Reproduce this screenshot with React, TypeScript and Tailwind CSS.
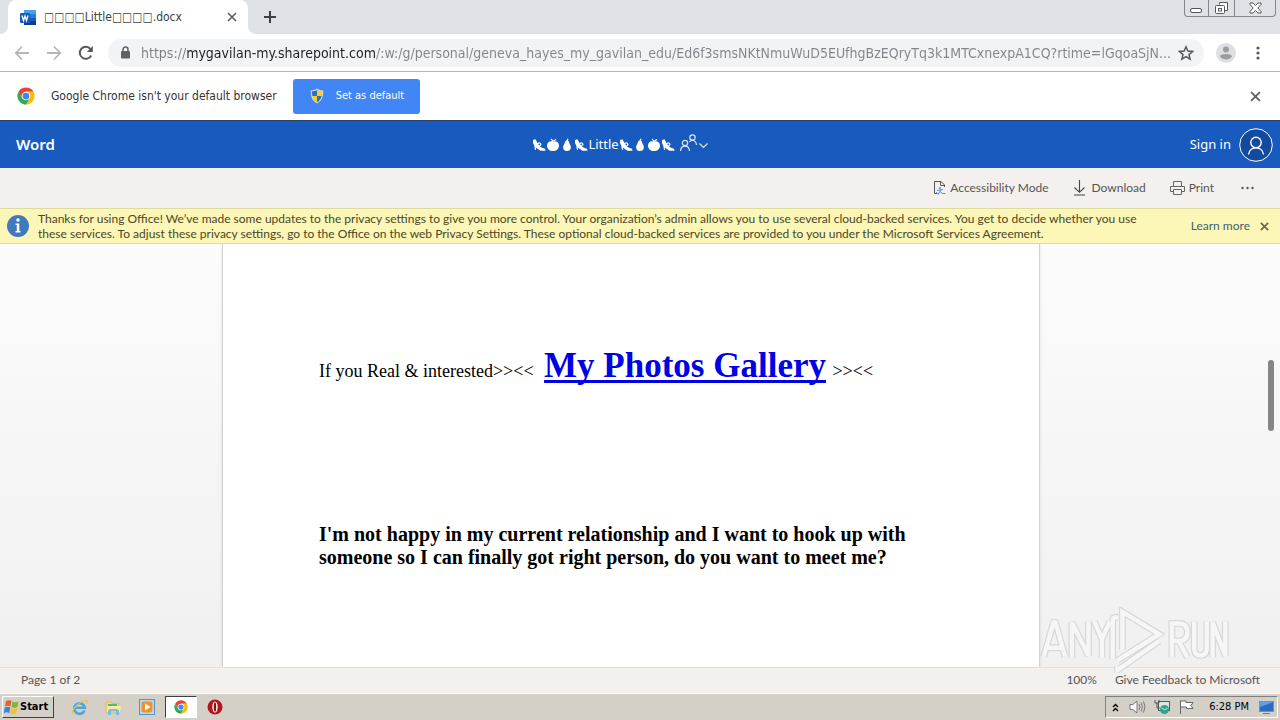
import React from "react";

function WordLogo() {
  return (
    <svg width="17" height="17" viewBox="0 0 17 17" aria-hidden="true">
      <rect x="4" y="1" width="12" height="4" fill="#41a5ee" />
      <rect x="4" y="5" width="12" height="4" fill="#2b7cd3" />
      <rect x="4" y="9" width="12" height="3" fill="#185abd" />
      <rect x="4" y="12" width="12" height="4" fill="#103f91" />
      <rect x="0" y="4" width="10" height="10" rx="1" fill="#185abd" />
      <path d="M2 6.5 3.5 11.5 5 7 6.5 11.5 8 6.5" fill="none" stroke="#fff" strokeWidth="1.3" />
    </svg>
  );
}

function ChromeLogo({ size }: { size: number }) {
  return (
    <svg width={size} height={size} viewBox="0 0 48 48" aria-hidden="true">
      <path d="M24 12.5H43.9A23 23 0 0 0 4.1 12.5L14 29.7Z" fill="#ea4335" />
      <path d="M34 29.7 24 47A23 23 0 0 0 43.9 12.5H24Z" fill="#fbbc05" />
      <path d="M14 29.7 4.1 12.5A23 23 0 0 0 24 47L34 29.7Z" fill="#34a853" />
      <circle cx="24" cy="24" r="11.5" fill="#fff" />
      <circle cx="24" cy="24" r="9" fill="#4285f4" />
    </svg>
  );
}

function Cross({ size, width, color }: { size: number; width: number; color: string }) {
  return (
    <svg width={size} height={size} viewBox="0 0 10 10" aria-hidden="true">
      <path d="M1 1 9 9M9 1 1 9" stroke={color} strokeWidth={width} fill="none" />
    </svg>
  );
}

function Shield() {
  return (
    <svg width="14" height="16" viewBox="0 0 14 16" aria-hidden="true">
      <path d="M7 .5C5 1.8 3 2.3.8 2.3c-.3 6 .9 10.4 6.2 13.2 5.3-2.8 6.5-7.2 6.2-13.2C11 2.3 9 1.8 7 .5Z" fill="#d5d2b8" />
      <path d="M7 2C5.5 3 3.7 3.4 2 3.5c0 1.7 0 3 .4 4.5H7Z" fill="#2a6fd0" />
      <path d="M7 2c1.5 1 3.3 1.4 5 1.5 0 1.7 0 3-.4 4.5H7Z" fill="#fbd116" />
      <path d="M2.4 8H7v6.2C4.6 12.8 3 10.7 2.4 8Z" fill="#fbd116" />
      <path d="M11.6 8H7v6.2c2.4-1.4 4-3.5 4.6-6.2Z" fill="#2a6fd0" />
    </svg>
  );
}

function TabStrip() {
  return (
    <div className="flex h-[34px] shrink-0 items-stretch bg-[#dee1e6]">
      <div className="w-2 bg-white">
        <div className="h-full rounded-br-lg bg-[#dee1e6]" />
      </div>
      <div className="w-60 bg-[#dee1e6]">
        <div className="flex h-full items-center rounded-t-lg bg-white pr-2 pl-3">
          <WordLogo />
          <span className="ml-[7px] flex-1 text-xs whitespace-nowrap text-[#3c4043]">□□□□Little□□□□.docx</span>
          <button aria-label="Close tab" className="flex size-4 items-center justify-center">
            <Cross size={10} width={1.7} color="#5f6368" />
          </button>
        </div>
      </div>
      <div className="w-2 bg-white">
        <div className="h-full rounded-bl-lg bg-[#dee1e6]" />
      </div>
      <button aria-label="New tab" className="ml-1 flex w-5 items-center justify-center">
        <svg width="12" height="12" viewBox="0 0 12 12"><path d="M6 0V12M0 6H12" stroke="#3c4043" strokeWidth="2" /></svg>
      </button>
      <div className="mr-1 ml-auto flex h-[17px] overflow-hidden rounded-b-[4px] border border-t-0 border-[#83878d]">
        <button aria-label="Minimize" className="flex w-6 items-center justify-center border-r border-[#83878d]">
          <svg width="13" height="14" viewBox="0 0 13 14"><rect x=".5" y="7.5" width="11" height="4" rx="1.5" fill="#fff" stroke="#53565c" /></svg>
        </button>
        <button aria-label="Restore" className="flex w-[26px] items-center justify-center border-r border-[#83878d]">
          <svg width="13" height="14" viewBox="0 0 13 14"><path d="M4.5 3.5V1.5H12.5V9.5H9.5" fill="#fff" stroke="#53565c" /><rect x=".5" y="4.5" width="9" height="8" rx="1" fill="#fff" stroke="#53565c" /><rect x="3.5" y="7.5" width="3" height="2.5" fill="none" stroke="#53565c" /></svg>
        </button>
        <button aria-label="Close" className="flex w-10 items-center justify-center">
          <svg width="13" height="12" viewBox="0 0 13 12"><path d="M1 1H4L6.5 3.5 9 1H12V2.5L8.8 6 12 9.5V11H9L6.5 8.5 4 11H1V9.5L4.2 6 1 2.5Z" fill="#fff" stroke="#53565c" /></svg>
        </button>
      </div>
    </div>
  );
}

function Arrow({ back }: { back?: boolean }) {
  return (
    <svg width="16" height="16" viewBox="0 0 16 16" aria-hidden="true">
      <path d={back ? "M15 8H2M8 1.5 1.8 8 8 14.5" : "M1 8H14M8 1.5 14.2 8 8 14.5"} stroke="#b4b6b9" strokeWidth="1.8" fill="none" />
    </svg>
  );
}

function Toolbar() {
  return (
    <div className="flex h-[38px] shrink-0 items-center border-b border-[#b3b5b8] bg-white px-3.5">
      <button aria-label="Back" className="flex w-4 justify-center"><Arrow back /></button>
      <button aria-label="Forward" className="ml-4 flex w-4 justify-center"><Arrow /></button>
      <button aria-label="Reload" className="ml-4 flex w-4 justify-center">
        <svg width="16" height="16" viewBox="0 0 16 16"><path d="M13.2 10.5A6 6 0 1 1 12.5 4.1" stroke="#55585c" strokeWidth="2" fill="none" /><path d="M14.8 1V7H8.8Z" fill="#55585c" /></svg>
      </button>
      <div className="ml-3.5 flex h-7 min-w-0 flex-1 items-center rounded-full bg-[#f1f3f4] pr-2.5 pl-3">
        <svg width="11" height="13" viewBox="0 0 11 13" aria-hidden="true"><path d="M3 6V3.5A2.5 2.5 0 0 1 8 3.5V6" stroke="#5f6368" strokeWidth="1.5" fill="none" /><rect x="1" y="5" width="9" height="7.5" rx="1" fill="#5f6368" /></svg>
        <input
          aria-label="Address"
          readOnly
          value="https://mygavilan-my.sharepoint.com/:w:/g/personal/geneva_hayes_my_gavilan_edu/Ed6f3smsNKtNmuWuD5EUfhgBzEQryTq3k1MTCxnexpA1CQ?rtime=lGqoaSjN..."
          className="ml-2.5 min-w-0 flex-1 bg-[linear-gradient(to_right,#7c8186_46px,#202124_46px,#202124_235px,#80868b_235px)] bg-clip-text text-sm text-transparent outline-none"
        />
        <button aria-label="Bookmark this page" className="ml-1">
          <svg width="16" height="16" viewBox="0 0 16 16"><path d="M8 1.8 9.9 6.1 14.6 6.5 11 9.6 12.1 14.2 8 11.7 3.9 14.2 5 9.6 1.4 6.5 6.1 6.1Z" stroke="#55585c" strokeWidth="1.5" fill="none" /></svg>
        </button>
      </div>
      <button aria-label="Profile" className="ml-3">
        <svg width="20" height="20" viewBox="0 0 20 20"><circle cx="10" cy="10" r="10" fill="#dedfe1" /><circle cx="10" cy="6.5" r="3" fill="#9a9da1" /><path d="M4 13.5Q4 11 10 11T16 13.5Q14 16.5 10 16.5T4 13.5Z" fill="#9a9da1" /></svg>
      </button>
      <button aria-label="Menu" className="ml-3.5 flex w-4 justify-center">
        <svg width="4" height="14" viewBox="0 0 4 14"><g fill="#55585c"><circle cx="2" cy="2" r="1.6" /><circle cx="2" cy="7" r="1.6" /><circle cx="2" cy="12" r="1.6" /></g></svg>
      </button>
    </div>
  );
}

function InfoBar() {
  return (
    <div className="flex h-[49px] shrink-0 items-center border-b border-[#2c4365] bg-white pr-[19px] pl-[17px]">
      <ChromeLogo size={18} />
      <span className="ml-4 text-xs text-[#333]">Google Chrome isn't your default browser</span>
      <button className="ml-4 flex h-[35px] w-[127px] items-center rounded-[3px] bg-[#4285f4] pl-[17px] text-[11px] text-white">
        <Shield />
        <span className="ml-3">Set as default</span>
      </button>
      <button aria-label="Dismiss" className="ml-auto"><Cross size={11} width={1.7} color="#5f6368" /></button>
    </div>
  );
}

function Heel() {
  return (
    <svg width="14" height="14" viewBox="0 0 14 14" role="img" aria-label="High-heeled shoe">
      <path d="M1 2 3.5 1.2 5.5 5 7.5 8 10 9.8 13 10.8 13.5 12.8H8.5L5.5 10.8 3.8 9.5 4 12H3L2.2 7.5 1 5Z" fill="#fff" />
      <path d="M5 6.2Q8.500 3.500 9 6.500L7.500 8" stroke="#fff" strokeWidth="1.1" fill="none" />
    </svg>
  );
}

function Apple() {
  return (
    <svg width="14" height="14" viewBox="0 0 14 14" role="img" aria-label="Apple">
      <path d="M7 3.7C9.5 2.5 13 4 13 7.5S10.5 13 7 13 1 11 1 7.5 4.5 2.5 7 3.7Z" fill="#fff" />
      <path d="M7 4.5C7 3 6.5 2 5 1M7.5 3 10 1.5" stroke="#fff" strokeWidth="1.3" fill="none" />
    </svg>
  );
}

function Pear() {
  return (
    <svg width="14" height="14" viewBox="0 0 14 14" role="img" aria-label="Pear">
      <path d="M7 2.5C9.5 2.5 8.8 5 10 6.5S11.8 13 7 13 2.8 8 4 6.5 4.5 2.5 7 2.5Z" fill="#fff" />
      <path d="M7 3 8 .8" stroke="#fff" strokeWidth="1.2" />
    </svg>
  );
}

function WordHeader() {
  return (
    <header className="flex h-[47px] shrink-0 items-center bg-[#185abd] pr-[7px] pl-4 font-['Noto_Sans',sans-serif] text-white">
      <div className="flex-1 text-[15px] font-semibold">Word</div>
      <button aria-label="Little, document details" className="mr-12 flex items-center text-[13px]">
        <Heel /><Apple /><Pear /><Heel />
        <span>Little</span>
        <Heel /><Pear /><Apple /><Heel />
        <svg className="mb-1 ml-1" width="30" height="18" viewBox="0 0 30 18" aria-hidden="true">
          <g fill="none" stroke="#dce6f5" strokeWidth="1.2">
            <circle cx="6" cy="9" r="2.7" /><path d="M1.5 17C2 10.500 10 10.500 10.500 17" />
            <circle cx="13.5" cy="3.5" r="2.7" /><path d="M10.5 8C12 5.500 17 5.500 17.500 11" />
            <path d="M20.5 9.5 24.5 13.5 28.5 9.5" />
          </g>
        </svg>
      </button>
      <div className="flex flex-1 items-center justify-end">
        <button className="flex items-center gap-2 text-[13px]">
          Sign in
          <svg width="34" height="34" viewBox="0 0 34 34" aria-hidden="true"><circle cx="17" cy="17" r="16.3" fill="#134a9e" stroke="#fff" /><g fill="none" stroke="#fff" strokeWidth="1.4"><circle cx="17" cy="14.5" r="5.2" /><path d="M9.5 26.5C10.5 17.5 23.5 17.5 24.5 26.5" /></g></svg>
        </button>
      </div>
    </header>
  );
}

function CommandBar() {
  return (
    <div className="flex h-10 shrink-0 items-center justify-end bg-[#f3f0ee] pr-[26px] font-['Lato',sans-serif] text-xs text-[#555]">
      <button className="flex items-center gap-1">
        <svg width="13" height="14" viewBox="0 0 13 14"><path d="M4 12.5H1.500V.5H8L11.500 4V6M7.500 1V4.500H11" fill="none" stroke="#555" /><circle cx="7" cy="7" r="1" fill="#4a90d9" /><path d="M4 9.5 10 8.5M7 8.5V10.5L5 13M7 10.5 9.5 12.5H12.5M3.5 11C3.5 13 5 13.5 6 13" stroke="#4a90d9" fill="none" /></svg>
        Accessibility Mode
      </button>
      <button className="ml-6 flex items-center gap-1.5">
        <svg width="13" height="16" viewBox="0 0 13 16"><path d="M6.5 0V12M1.5 7.5 6.5 12.3 11.5 7.5M1 15H12" fill="none" stroke="#444" strokeWidth="1.1" /></svg>
        Download
      </button>
      <button className="ml-6 flex items-center gap-1">
        <svg width="15" height="14" viewBox="0 0 15 14"><path d="M3.5 5.5V.5H11.5V5.5M3.5 10.5H.5V5.5H14.5V10.5H11.5M3.5 8.5H11.5V13.5H3.5Z" fill="none" stroke="#666" /></svg>
        Print
      </button>
      <button aria-label="More options" className="ml-[27px]">
        <svg width="13" height="4" viewBox="0 0 13 4"><g fill="#555"><circle cx="1.5" cy="2" r="1.2" /><circle cx="6.5" cy="2" r="1.2" /><circle cx="11.5" cy="2" r="1.2" /></g></svg>
      </button>
    </div>
  );
}

function PrivacyNotice() {
  return (
    <div className="flex h-9 shrink-0 items-center border-y border-[#dedba0] bg-[#fcf7b6] pr-[11px] pl-[7px] font-['Lato',sans-serif] text-xs text-[#4b4625]">
      <svg className="shrink-0" width="22" height="22" viewBox="0 0 22 22" aria-hidden="true"><circle cx="11" cy="11" r="11" fill="#4079bd" /><circle cx="11" cy="5" r="1.7" fill="#fff" /><path d="M8.5 8.5H12.3V16H13.5V17.5H8.5V16H9.8V10H8.5Z" fill="#fff" /></svg>
      <p className="ml-[9px] flex-1 leading-[15px] whitespace-nowrap">
        Thanks for using Office! We’ve made some updates to the privacy settings to give you more control. Your organization’s admin allows you to use several cloud-backed services. You get to decide whether you use
        <br />
        these services. To adjust these privacy settings, go to the Office on the web Privacy Settings. These optional cloud-backed services are provided to you under the Microsoft Services Agreement.
      </p>
      <a href="#learn-more" className="whitespace-nowrap text-[#3d6270]">Learn more</a>
      <button aria-label="Dismiss notice" className="ml-2.5"><Cross size={9} width={2} color="#716b4d" /></button>
    </div>
  );
}

const letters =
  "M3 51 13 16H15L25 51M7 42H21M32 52V16L49 50V15M55 15 63 33 71 15M63 33V52M135 52V17H142Q151 17 151 26T142 35H135M142 35 151 52M158 15V42Q158 50 164.5 50T171 42V15M177 52V16L190 50V15";
const emblem = "M80 11Q74 9 74 14V54M84 44V5L122 28 79 55M84 44V12M79 61V65L122 35";

function Watermark() {
  return (
    <svg className="absolute right-12 -bottom-1.5 z-10" width="194" height="66" viewBox="0 0 194 68" role="img" aria-label="ANY RUN">
      <g fill="none" stroke="#c4c4c4" strokeWidth="7" opacity=".55">
        <path d={letters} />
        <path d={emblem} />
      </g>
      <g fill="none" stroke="#f6f6f6" strokeWidth="4.5">
        <path d={letters} />
        <path d={emblem} />
      </g>
    </svg>
  );
}

function DocumentView() {
  return (
    <main className="relative flex min-h-0 flex-1 bg-linear-to-b from-[#fcfcfc] to-[#f0f0f0]">
      <div className="flex min-w-0 flex-1 justify-center overflow-hidden">
        <article className="w-[818px] border-x border-[#d2d2d2] bg-white px-24 font-['Liberation_Serif',serif] text-black shadow-sm">
          <p className="mt-[103px] text-lg leading-12 whitespace-nowrap">
            If you Real &amp; interested&gt;&gt;&lt;&lt;{" "}
            <a href="#gallery" className="mr-0.5 ml-1.5 text-[35px] leading-8 font-bold text-[#0000e6] underline decoration-3 underline-offset-[3px] [text-decoration-skip-ink:none]">My Photos Gallery</a>
            {" "}&gt;&gt;&lt;&lt;
          </p>
          <p className="mt-32 text-xl leading-[23px] font-bold whitespace-nowrap">
            I'm not happy in my current relationship and I want to hook up with
            <br />
            someone so I can finally got right person, do you want to meet me?
          </p>
        </article>
      </div>
      <div className="flex w-[18px] justify-center pt-[116px]">
        <div className="h-[71px] w-1.5 rounded-full bg-[#868686]" />
      </div>
      <Watermark />
    </main>
  );
}

function StatusBar() {
  return (
    <footer className="flex h-[26px] shrink-0 items-center border-t border-[#e3e1df] bg-[#f3f0ee] pr-5 pb-0.5 pl-[21px] font-['Lato',sans-serif] text-xs text-[#555]">
      <span>Page 1 of 2</span>
      <span className="mr-[18px] ml-auto">100%</span>
      <button>Give Feedback to Microsoft</button>
    </footer>
  );
}

function WindowsFlag() {
  return (
    <svg width="17" height="16" viewBox="0 0 17 16" aria-hidden="true">
      <path d="M3 2Q6 .5 8.5 2L7.5 7.5Q5 6 2 7.5Z" fill="#e8622c" />
      <path d="M9.5 2.5Q12 4 15.5 2.5L14.5 8Q11.5 9.5 8.5 8Z" fill="#7cb83a" />
      <path d="M1.8 8.5Q4.5 7 7.3 8.5L6.3 14Q4 12.5.8 14Z" fill="#3a86d4" />
      <path d="M8.3 9Q11 10.5 14.3 9L13.3 14.5Q10 16 7.3 14.5Z" fill="#f6c12c" />
    </svg>
  );
}

function Taskbar() {
  return (
    <div className="flex h-[27px] shrink-0 items-center border-t border-white bg-[#d4d0c8] px-0.5">
      <button className="flex h-[22px] w-[52px] items-center border border-t-white border-r-[#404040] border-b-[#404040] border-l-white text-[11px] font-bold text-black">
        <WindowsFlag />
        Start
      </button>
      <button aria-label="Internet Explorer" className="ml-[17px]">
        <svg width="17" height="17" viewBox="0 0 17 17"><path d="M13.5 11.5A5.3 5.3 0 1 1 13.8 8.7H4.5" fill="none" stroke="#4aa7e0" strokeWidth="2.6" /><path d="M2 15C-1 12 9 1.5 15 1.5 17 1.5 16 4 15 5" fill="none" stroke="#e8c34c" strokeWidth="1.2" /></svg>
      </button>
      <button aria-label="File Explorer" className="ml-[17px]">
        <svg width="17" height="17" viewBox="0 0 17 17"><path d="M1 3H6L7 4.5H14V14H1Z" fill="#f0d77b" stroke="#d4b250" strokeWidth=".6" /><path d="M3 5H12V7H3Z" fill="#5cb574" /><path d="M2 7H16L15 13H2Z" fill="#faeaa5" /><path d="M3 16V12Q3 10 5 10H12Q14 10 14 12V16H11V12.5H6V16Z" fill="#78bde8" /></svg>
      </button>
      <button aria-label="Media Player" className="ml-[17px]">
        <svg width="17" height="17" viewBox="0 0 17 17"><rect x=".5" y=".5" width="15" height="15" fill="#b8d7f0" stroke="#5593c8" /><rect x="2.5" y="2.5" width="11" height="11" rx="2" fill="#f2902a" /><path d="M6 4.5 11.5 8 6 11.5Z" fill="#fff" /></svg>
      </button>
      <button aria-label="Google Chrome" className="ml-[9px] flex h-[22px] w-8 items-center justify-center border border-t-[#404040] border-r-white border-b-white border-l-[#404040] bg-white">
        <ChromeLogo size={14} />
      </button>
      <button aria-label="Opera" className="ml-2.5">
        <svg width="16" height="16" viewBox="0 0 16 16"><circle cx="8" cy="8" r="7.5" fill="#b3151c" /><ellipse cx="8" cy="8" rx="2.7" ry="5.5" fill="#fff" /><ellipse cx="8" cy="8" rx="1.2" ry="4.8" fill="#8e0e14" /></svg>
      </button>
      <div className="ml-auto flex h-[22px] items-center border border-t-[#808080] border-r-white border-b-white border-l-[#808080] pr-0.5 pl-1.5 text-black">
        <button aria-label="Show hidden icons"><svg width="7" height="9" viewBox="0 0 7 9"><path d="M1 4 3.5 1.5 6 4M1 8 3.5 5.5 6 8" fill="none" stroke="#000" strokeWidth="1.4" /></svg></button>
        <button aria-label="Volume" className="ml-2.5"><svg width="17" height="16" viewBox="0 0 17 16"><path d="M1 5.5H4L8 2V14L4 10.5H1Z" fill="#fff" stroke="#777" /><path d="M10 5Q12 8 10 11M12 3.5Q15 8 12 12.5M14.5 2.5Q17.5 8 14.5 13.5" fill="none" stroke="#777" /></svg></button>
        <button aria-label="Network" className="ml-2"><svg width="16" height="16" viewBox="0 0 16 16"><rect x="4.5" y="2.5" width="11" height="9" fill="#d8e8e8" stroke="#555" /><path d="M1 1V4H5V1M3 4V9H6" fill="none" stroke="#555" /><circle cx="10.5" cy="10.5" r="4.5" fill="#30a58c" /><path d="M7.5 9Q10 12 13.5 9.5" stroke="#b7e5da" fill="none" /></svg></button>
        <button aria-label="Action Center" className="ml-2"><svg width="17" height="16" viewBox="0 0 17 16"><path d="M2.5 15V1.5M2.5 2H8V3.5H15L13 6.5 15 9.5H8.5V8H2.5" fill="#fff" stroke="#666" /></svg></button>
        <span className="ml-3.5 text-[11px]">6:28 PM</span>
        <button aria-label="Show desktop" className="ml-2.5"><svg width="16" height="14" viewBox="0 0 16 14"><rect x=".5" y="1.5" width="14" height="10" fill="#2d6bc0" stroke="#7590b0" /><path d="M1 2H14L1 7Z" fill="#62a0e4" /><path d="M4 13.5H11" stroke="#777" /></svg></button>
      </div>
    </div>
  );
}

export default function App() {
  return (
    <div className="flex h-screen w-full flex-col overflow-hidden font-['DejaVu_Sans_Condensed','DejaVu_Sans',sans-serif]">
      <TabStrip />
      <Toolbar />
      <InfoBar />
      <WordHeader />
      <CommandBar />
      <PrivacyNotice />
      <DocumentView />
      <StatusBar />
      <Taskbar />
    </div>
  );
}
